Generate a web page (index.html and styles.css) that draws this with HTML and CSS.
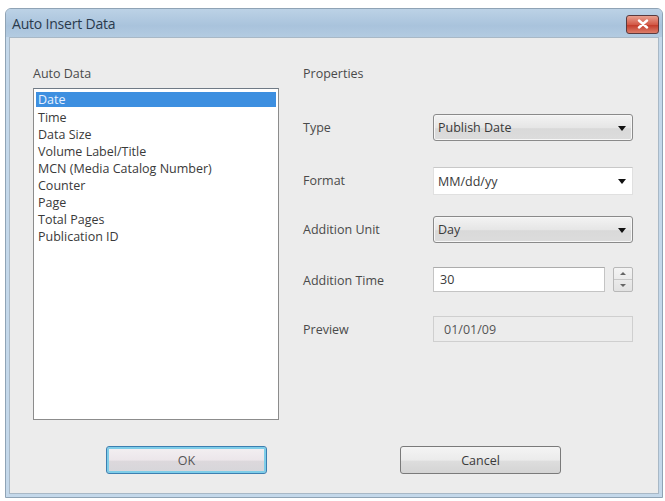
FILE: index.html
```html
<!DOCTYPE html>
<html>
<head>
<meta charset="utf-8">
<link rel="stylesheet" href="styles.css">
</head>
<body>
<div class="window">
  <div class="titlebar">
    <span class="title">Auto Insert Data</span>
    <div class="close">
      <svg width="12" height="10" viewBox="0 0 12 10"><path d="M2 1.5 L10 8.5 M10 1.5 L2 8.5" stroke="#fff" stroke-width="2.4" stroke-linecap="round"/></svg>
    </div>
  </div>
  <div class="client">
    <div class="main">
      <div class="left">
        <div class="caption">Auto Data</div>
        <div class="listbox">
          <div class="item selected">Date</div>
          <div class="item">Time</div>
          <div class="item">Data Size</div>
          <div class="item">Volume Label/Title</div>
          <div class="item">MCN (Media Catalog Number)</div>
          <div class="item">Counter</div>
          <div class="item">Page</div>
          <div class="item">Total Pages</div>
          <div class="item">Publication ID</div>
        </div>
      </div>
      <div class="right">
        <div class="caption">Properties</div>
        <div class="props">
          <div class="plabel">Type</div>
          <div class="combo btnlike"><span>Publish Date</span><i class="arrow"></i></div>
          <div class="plabel">Format</div>
          <div class="combo edit"><span>MM/dd/yy</span><i class="arrow"></i></div>
          <div class="plabel">Addition Unit</div>
          <div class="combo btnlike"><span>Day</span><i class="arrow"></i></div>
          <div class="plabel">Addition Time</div>
          <div class="spinrow">
            <div class="field">30</div>
            <div class="spin">
              <div class="sb"><i class="up"></i></div>
              <div class="sb"><i class="down"></i></div>
            </div>
          </div>
          <div class="plabel">Preview</div>
          <div class="field readonly">01/01/09</div>
        </div>
      </div>
    </div>
    <div class="buttons">
      <button class="btn default">OK</button>
      <button class="btn cancel">Cancel</button>
    </div>
  </div>
</div>
</body>
</html>
```

FILE: styles.css
```css
html, body {
  margin: 0;
  padding: 0;
  background: #ffffff;
}
body {
  padding: 8px 2px 3px 5px;
  font-family: "Open Sans", "Noto Sans", sans-serif;
  font-size: 12.5px;
  color: #4a4a4a;
}
.window {
  width: 658px;
  height: 490px;
  box-sizing: border-box;
  border: 1px solid #8fa3b5;
  border-radius: 6px 6px 0 0;
  background: #c4d8ea;
  display: flex;
  flex-direction: column;
  padding: 0 3px 3px 3px;
}
.titlebar {
  height: 28px;
  display: flex;
  align-items: center;
  justify-content: space-between;
  background: linear-gradient(#bcd2e6, #a9c3dc 60%, #b3cbe1);
  margin: 0 -3px;
  padding: 0 3px 0 6px;
  border-radius: 5px 5px 0 0;
}
.title {
  font-size: 14px;
  color: #2a3a4c;
  letter-spacing: -0.2px;
}
.close {
  width: 33px;
  height: 19px;
  margin-top: 2px;
  box-sizing: border-box;
  border: 1px solid #5a3a3e;
  border-radius: 3px;
  background: linear-gradient(#e9a08f, #d35a48 50%, #c43d2c 55%, #dc7e6a);
  display: flex;
  align-items: center;
  justify-content: center;
}
.client {
  flex: 1;
  background: #ececec;
  border: 1px solid #a8b8c6;
  display: flex;
  flex-direction: column;
  padding: 21px 0 0 23px;
}
.main {
  display: flex;
}
.caption {
  height: 28px;
  line-height: 14px;
  padding-top: 8px;
  box-sizing: border-box;
  color: #4a4a4a;
}
.left {
  width: 246px;
}
.listbox {
  height: 332px;
  margin-top: 1px;
  box-sizing: border-box;
  border: 1px solid #8c8c8c;
  border-top-color: #6f7a86;
  background: #ffffff;
  padding: 3px 2px;
}
.item {
  height: 17px;
  line-height: 17px;
  padding-left: 2px;
  color: #3a3a3a;
}
.item.selected {
  background: #3d8fe0;
  color: #e6f1ff;
  height: 15px;
  line-height: 15px;
  margin-bottom: 2px;
}
.right {
  margin-left: 24px;
  width: 331px;
}
.props {
  display: grid;
  grid-template-columns: 130px 200px;
  grid-template-rows: 53px 49px 51px 49px 27px;
  margin-top: 27px;
  align-items: start;
}
.plabel {
  color: #4a4a4a;
  line-height: 27px;
}
.combo {
  height: 27px;
  box-sizing: border-box;
  display: flex;
  align-items: center;
  justify-content: space-between;
  padding: 0 6px 0 4px;
  color: #3a3a3a;
}
.combo.btnlike {
  border: 1px solid #8a8a8a;
  border-radius: 3px;
  background: linear-gradient(#f3f3f3, #e6e6e6 50%, #d9d9d9 55%, #dcdcdc);
  box-shadow: inset 0 0 0 1px #f7f7f7;
}
.combo.edit {
  background: #ffffff;
  border: 1px solid #e0e0e0;
  border-top-color: #c8c8c8;
  height: 28px;
}
.arrow {
  width: 0;
  height: 0;
  border-left: 4px solid transparent;
  border-right: 4px solid transparent;
  border-top: 5px solid #111;
  margin-top: 1px;
}
.spinrow {
  display: flex;
  align-items: center;
  gap: 8px;
  height: 25px;
}
.field {
  height: 25px;
  box-sizing: border-box;
  border: 1px solid #c4c4c4;
  border-top-color: #acacac;
  background: #ffffff;
  display: flex;
  align-items: center;
  padding-left: 6px;
  color: #3a3a3a;
  flex: 1;
}
.field.readonly {
  background: #ececec;
  border-color: #cfcfcf;
  height: 26px;
  color: #555;
  padding-left: 10px;
}
.spin {
  width: 20px;
  height: 25px;
  display: flex;
  flex-direction: column;
  box-sizing: border-box;
  border: 1px solid #b8b8b8;
  border-radius: 2px;
  background: linear-gradient(#f4f4f4, #e2e2e2);
}
.sb {
  flex: 1;
  display: flex;
  align-items: center;
  justify-content: center;
}
.sb + .sb {
  border-top: 1px solid #c8c8c8;
}
.up, .down {
  width: 0;
  height: 0;
  border-left: 3px solid transparent;
  border-right: 3px solid transparent;
}
.up { border-bottom: 3px solid #666; }
.down { border-top: 3px solid #666; }
.buttons {
  display: flex;
  margin-top: 26px;
  padding-left: 73px;
  gap: 133px;
}
.btn {
  width: 161px;
  height: 28px;
  box-sizing: border-box;
  font-family: inherit;
  font-size: 12.5px;
  color: #3a3a3a;
  border-radius: 3px;
  border: 1px solid #7a7a7a;
  background: linear-gradient(#f4f4f4, #ebebeb 50%, #dddddd 55%, #d4d4d4);
  padding: 0;
}
.btn.default {
  border-color: #3c7fb1;
  box-shadow: inset 0 0 0 2px #7fcde8;
  background: linear-gradient(#f3f0f2, #ece6ea 50%, #dcd8dc 55%, #d6d6da);
  color: #555;
}
```
